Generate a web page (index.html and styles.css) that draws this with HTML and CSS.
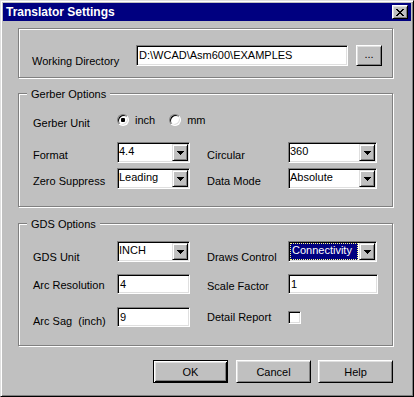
FILE: index.html
```html
<!DOCTYPE html>
<html lang="en">
<head>
<meta charset="UTF-8">
<meta name="viewport" content="width=device-width, initial-scale=1.0">
<title>Translator Settings</title>
<link rel="stylesheet" href="styles.css">
</head>
<body>

<div class="window">
  <!-- Title Bar -->
  <div class="titlebar">
    <span class="title">Translator Settings</span>
    <span class="btn close-btn">
      <svg width="8" height="7" viewBox="0 0 8 7" shape-rendering="crispEdges"><path d="M0 0h2v1H0zM6 0h2v1H6zM1 1h2v1H1zM5 1h2v1H5zM2 2h4v1H2zM3 3h2v1H3zM2 4h4v1H2zM1 5h2v1H1zM5 5h2v1H5zM0 6h2v1H0zM6 6h2v1H6z" fill="#000"/></svg>
    </span>
  </div>

  <div class="content">
    <!-- Working Directory -->
    <div class="group group-dir">
      <span class="label dir-label">Working Directory</span>
      <div class="sunken field dir-field">D:\WCAD\Asm600\EXAMPLES</div>
      <div class="btn browse-btn">...</div>
    </div>

    <!-- Gerber Options -->
    <div class="group group-gerber">
      <span class="group-title">Gerber Options</span>
      <div class="form-grid gerber-grid">
        <span class="label off-3">Gerber Unit</span>
        <div class="radios">
          <span class="sunken radio checked"></span><span class="radio-text">inch</span>
          <span class="sunken radio radio-mm"></span><span class="radio-text">mm</span>
        </div>

        <span class="label off-7">Format</span>
        <div class="sunken combo">
          <span class="combo-text">4.4</span>
          <span class="combo-btn"><svg width="7" height="4" viewBox="0 0 7 4" shape-rendering="crispEdges"><path d="M0 0h7v1H0zM1 1h5v1H1zM2 2h3v1H2zM3 3h1v1H3z" fill="#000"/></svg></span>
        </div>
        <span class="label off-7">Circular</span>
        <div class="sunken combo wide">
          <span class="combo-text">360</span>
          <span class="combo-btn"><svg width="7" height="4" viewBox="0 0 7 4" shape-rendering="crispEdges"><path d="M0 0h7v1H0zM1 1h5v1H1zM2 2h3v1H2zM3 3h1v1H3z" fill="#000"/></svg></span>
        </div>

        <span class="label off-7">Zero Suppress</span>
        <div class="sunken combo">
          <span class="combo-text">Leading</span>
          <span class="combo-btn"><svg width="7" height="4" viewBox="0 0 7 4" shape-rendering="crispEdges"><path d="M0 0h7v1H0zM1 1h5v1H1zM2 2h3v1H2zM3 3h1v1H3z" fill="#000"/></svg></span>
        </div>
        <span class="label off-7">Data Mode</span>
        <div class="sunken combo wide">
          <span class="combo-text">Absolute</span>
          <span class="combo-btn"><svg width="7" height="4" viewBox="0 0 7 4" shape-rendering="crispEdges"><path d="M0 0h7v1H0zM1 1h5v1H1zM2 2h3v1H2zM3 3h1v1H3z" fill="#000"/></svg></span>
        </div>
      </div>
    </div>

    <!-- GDS Options -->
    <div class="group group-gds">
      <span class="group-title">GDS Options</span>
      <div class="form-grid gds-grid">
        <span class="label off-10">GDS Unit</span>
        <div class="sunken combo">
          <span class="combo-text">INCH</span>
          <span class="combo-btn"><svg width="7" height="4" viewBox="0 0 7 4" shape-rendering="crispEdges"><path d="M0 0h7v1H0zM1 1h5v1H1zM2 2h3v1H2zM3 3h1v1H3z" fill="#000"/></svg></span>
        </div>
        <span class="label off-10">Draws Control</span>
        <div class="sunken combo wide">
          <span class="combo-text selected">Connectivity</span>
          <span class="combo-btn"><svg width="7" height="4" viewBox="0 0 7 4" shape-rendering="crispEdges"><path d="M0 0h7v1H0zM1 1h5v1H1zM2 2h3v1H2zM3 3h1v1H3z" fill="#000"/></svg></span>
        </div>

        <span class="label off-5">Arc Resolution</span>
        <div class="sunken field">4</div>
        <span class="label off-6">Scale Factor</span>
        <div class="sunken field wide">1</div>

        <span class="label off-8">Arc Sag &nbsp;(inch)</span>
        <div class="sunken field">9</div>
        <span class="label off-4">Detail Report</span>
        <span class="sunken checkbox"></span>
      </div>
    </div>

    <!-- Buttons -->
    <div class="buttons">
      <div class="btn default">OK</div>
      <div class="btn">Cancel</div>
      <div class="btn help">Help</div>
    </div>
  </div>
</div>

</body>
</html>
```

FILE: styles.css
```css
body {
  margin: 0;
  font-family: "Liberation Sans", Arial, sans-serif;
  font-size: 11px;
  color: #000;
  background: #c0c0c0;
}

.window {
  width: 414px;
  height: 397px;
  box-sizing: border-box;
  background: #c0c0c0;
  border: 1px solid;
  border-color: #dfdfdf #000 #000 #dfdfdf;
  box-shadow: inset 1px 1px #fff, inset -1px -1px #808080;
  padding: 2px;
}

/* title bar */
.titlebar {
  display: flex;
  align-items: flex-start;
  height: 18px;
  background: #000080;
  color: #fff;
}
.title {
  flex: 1;
  padding-left: 3px;
  font-size: 12px;
  font-weight: bold;
  line-height: 18px;
}
.close-btn {
  width: 16px;
  height: 14px;
  margin: 2px 3px 0 0;
}

/* raised button */
.btn {
  display: flex;
  align-items: center;
  justify-content: center;
  box-sizing: border-box;
  background: #c0c0c0;
  border: 1px solid;
  border-color: #fff #000 #000 #fff;
  box-shadow: inset 1px 1px #dfdfdf, inset -1px -1px #808080;
}

/* sunken field */
.sunken {
  box-sizing: border-box;
  background: #fff;
  border: 1px solid;
  border-color: #808080 #fff #fff #808080;
  box-shadow: inset 1px 1px #000, inset -1px -1px #dfdfdf;
}

.content {
  padding: 7px 18px 0 15px;
}

/* etched group box */
.group {
  position: relative;
  box-sizing: border-box;
  border: 1px solid #808080;
  box-shadow: inset 1px 1px #fff, 1px 1px #fff;
}
.group-title {
  position: absolute;
  top: -6px;
  left: 8px;
  padding: 0 4px;
  background: #c0c0c0;
  line-height: 13px;
}

.label {
  line-height: 13px;
  white-space: nowrap;
}
.off-3 { padding-top: 3px; }
.off-4 { padding-top: 4px; }
.off-5 { padding-top: 5px; }
.off-6 { padding-top: 6px; }
.off-7 { padding-top: 7px; }
.off-8 { padding-top: 8px; }
.off-10 { padding-top: 10px; }

/* working directory */
.group-dir {
  display: flex;
  align-items: flex-start;
  height: 50px;
  padding: 16px 0 0 13px;
  margin-bottom: 15px;
}
.dir-label {
  width: 104px;
  margin-top: 10px;
}
.field {
  width: 73px;
  height: 20px;
  padding: 1px 0 0 2px;
  line-height: 17px;
  white-space: nowrap;
}
.field.wide {
  width: 90px;
}
.dir-field {
  width: 212px;
  height: 21px;
}
.browse-btn {
  width: 26px;
  height: 21px;
  margin-left: 8px;
  padding-bottom: 3px;
}

/* option groups */
.group-gerber {
  height: 114px;
  padding: 20px 0 0 14px;
  margin-bottom: 16px;
}
.group-gds {
  height: 123px;
  padding: 17px 0 0 14px;
}
.form-grid {
  display: grid;
  grid-template-columns: 84px 90px 81px 89px;
  align-items: start;
}
.gerber-grid {
  grid-template-rows: 28px 26px 21px;
}
.gds-grid {
  grid-template-rows: 33px 33px 20px;
}

.radios {
  grid-column: 2 / span 3;
  display: flex;
  align-items: center;
  height: 12px;
}
.radio {
  width: 12px;
  height: 12px;
  border-radius: 50%;
}
.radio.checked {
  background: radial-gradient(circle, #000 0 2px, #fff 2.5px);
}
.radio-text {
  margin-left: 6px;
  line-height: 13px;
}
.radio-mm {
  margin-left: 14px;
}

.checkbox {
  width: 13px;
  height: 13px;
  margin-top: 4px;
}

/* combo box */
.combo {
  display: flex;
  width: 73px;
  height: 21px;
  padding: 1px;
}
.combo.wide {
  width: 89px;
}
.combo-text {
  flex: 1;
  line-height: 15px;
  white-space: nowrap;
  overflow: hidden;
}
.combo-text.selected {
  margin-right: 1px;
  padding-left: 1px;
  line-height: 13px;
  background: #000080;
  color: #fff;
  border: 1px dotted #ffff80;
}
.combo-btn {
  display: flex;
  align-items: center;
  justify-content: center;
  width: 16px;
  height: 17px;
  box-sizing: border-box;
  background: #c0c0c0;
  border: 1px solid;
  border-color: #dfdfdf #000 #000 #dfdfdf;
  box-shadow: inset 1px 1px #fff, inset -1px -1px #808080;
}

/* dialog buttons */
.buttons {
  display: flex;
  justify-content: flex-end;
  margin-top: 14px;
}
.buttons .btn {
  width: 75px;
  height: 23px;
  margin-left: 8px;
}
.buttons .help {
  margin-left: 7px;
}
.btn.default {
  border: 1px solid #000;
  box-shadow: inset 1px 1px #fff, inset -1px -1px #000, inset 2px 2px #dfdfdf, inset -2px -2px #808080;
}
```
